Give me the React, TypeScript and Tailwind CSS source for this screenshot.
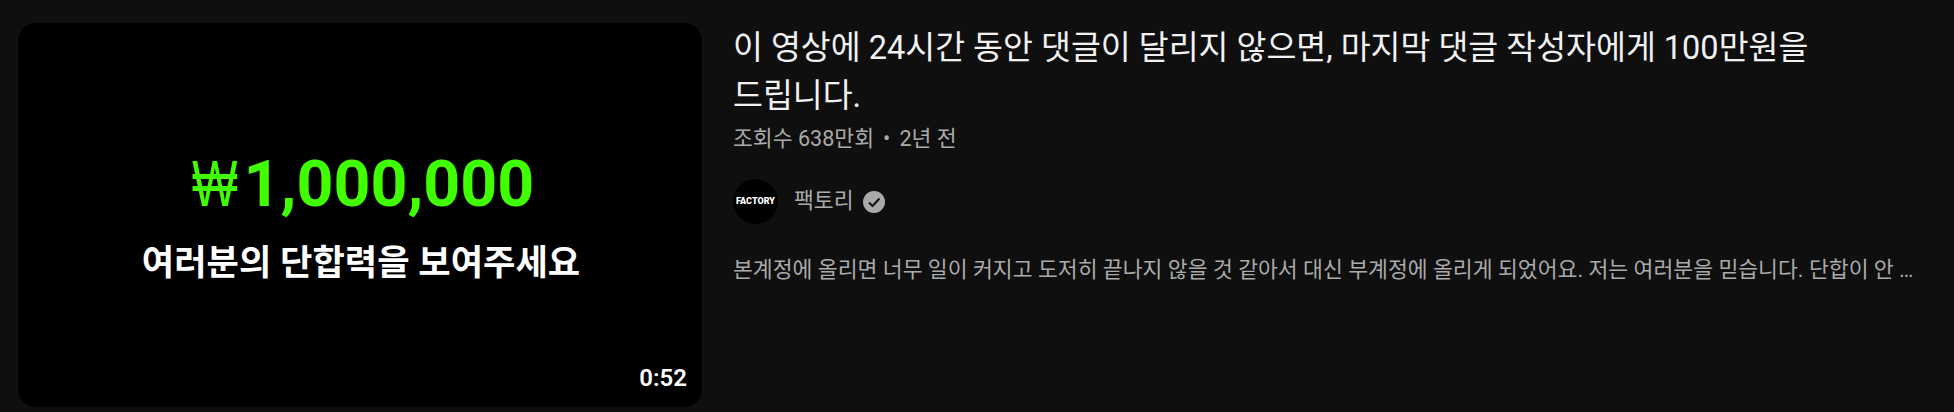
export default function App() {
  return (
    <div className="flex h-[412px] w-[1954px] gap-[31px] overflow-hidden bg-[#0f0f0f] px-[18px] pt-[23px] font-['Roboto','Noto_Sans_CJK_KR',sans-serif]">
      <div className="relative flex h-[384px] w-[684px] shrink-0 flex-col items-center rounded-[18px] bg-black pt-[122px]">
        <div className="pl-[6px] text-[64.5px] leading-[78px] font-bold whitespace-nowrap text-[#40ff00]">
          <span className="inline-block w-[52px] origin-left scale-x-75 font-['Liberation_Sans',sans-serif] font-normal">₩</span>1,000,000
        </div>
        <div className="mt-[17px] pl-[2px] text-[35.2px] leading-[46px] font-bold text-white">여러분의 단합력을 보여주세요</div>
        <div className="absolute right-[15px] bottom-[15px] text-[24px] leading-[28px] font-semibold text-white">0:52</div>
      </div>
      <div className="flex min-w-0 flex-1 flex-col">
        <h3 className="w-[1140px] break-keep pt-[1px] text-[32.5px] leading-[48px] font-normal text-[#f1f1f1]">
          이 영상에 24시간 동안 댓글이 달리지 않으면, 마지막 댓글 작성자에게 100만원을 드립니다.
        </h3>
        <div className="mt-[5px] flex text-[21.6px] leading-[27px] text-[#aaaaaa]">
          <span>조회수 638만회</span>
          <span className="mx-[9px]">•</span>
          <span>2년 전</span>
        </div>
        <div className="mt-[27px] flex h-[45px] items-center">
          <div className="flex h-[45px] w-[45px] items-center justify-center rounded-full bg-black text-[9px] leading-none font-black text-white">FACTORY</div>
          <span className="ml-[16px] text-[21.6px] text-[#aaaaaa]">팩토리</span>
          <svg viewBox="0 0 22 22" className="ml-[9px] h-[22px] w-[22px]">
            <circle cx="11" cy="11" r="11" fill="#aaaaaa" />
            <path d="M6 11.5l3.5 3.5L16.5 7.5" fill="none" stroke="#0f0f0f" strokeWidth="2" />
          </svg>
        </div>
        <p className="mt-[32px] whitespace-nowrap text-[21.6px] leading-[27px] text-[#aaaaaa]">
          본계정에 올리면 너무 일이 커지고 도저히 끝나지 않을 것 같아서 대신 부계정에 올리게 되었어요. 저는 여러분을 믿습니다. 단합이 안 …
        </p>
      </div>
    </div>
  );
}
